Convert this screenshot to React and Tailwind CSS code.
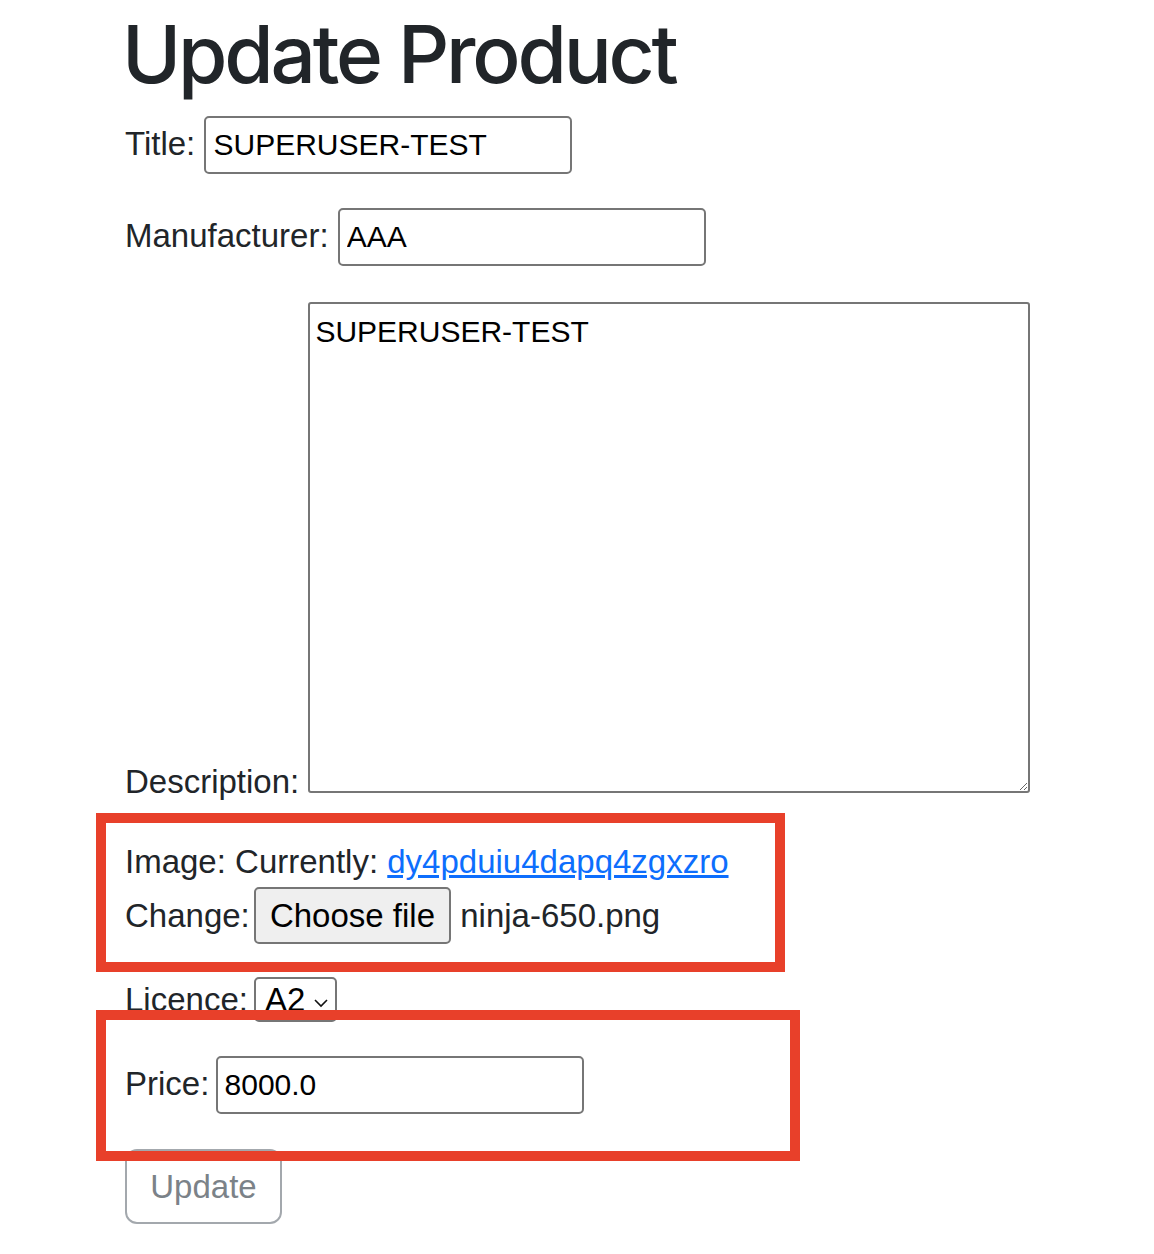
export default function App() {
  return (
    <div className="relative min-h-[1254px] bg-white font-['Liberation_Sans',Arial,sans-serif] text-[33px] leading-[48px] text-[#212529]">
      <div className="pl-[125px]">
        <h1 className="-ml-[3px] font-['Inter',sans-serif] font-medium text-[80px] leading-[100px] tracking-[-0.04em] pt-[4px] mb-[12px]">
          Update Product
        </h1>
        <form>
          <p className="mb-[32px]">
            Title:{" "}
            <input
              type="text"
              defaultValue="SUPERUSER-TEST"
              className="w-[368px] h-[58px] px-[7px] border-2 border-[#767676] rounded-[5px] text-black text-[30px]"
            />
          </p>
          <p className="mb-[36px] pt-[2px]">
            Manufacturer:{" "}
            <input
              type="text"
              defaultValue="AAA"
              className="w-[368px] h-[58px] px-[7px] border-2 border-[#767676] rounded-[5px] text-black text-[30px]"
            />
          </p>
          <p className="mb-[32px]">
            Description:{" "}
            <textarea
              defaultValue="SUPERUSER-TEST"
              className="w-[722px] h-[491px] px-[5px] py-[4px] border-2 border-[#767676] rounded-[3px] text-black text-[30px] leading-[48px]"
            />
          </p>
          <p className="mb-[32px]">
            Image: Currently:{" "}
            <a href="#" className="text-[#0d6efd] underline">
              dy4pduiu4dapq4zgxzro
            </a>
            <br />
            <span className="inline-block mt-[1px]">
              Change:{" "}
              <span className="-ml-[5px] inline-block h-[57px] px-[14px] leading-[53px] bg-[#efefef] border-2 border-[#767676] rounded-[5px] text-black">
                Choose file
              </span>{" "}
              ninja-650.png
            </span>
          </p>
          <p className="mb-[32px]">
            Licence:{" "}
            <span className="-ml-[3px] inline-block h-[45px] pl-[9px] pr-[6px] border-2 border-[#767676] rounded-[5px] text-black leading-[41px]">
              A2
              <svg width="16" height="10" viewBox="0 0 16 10" className="inline-block ml-[8px] align-[3px]">
                <path d="M2 2l6 6 6-6" fill="none" stroke="#111" strokeWidth="1.6" />
              </svg>
            </span>
          </p>
          <p className="mb-[35px]">
            Price:{" "}
            <input
              type="text"
              defaultValue="8000.0"
              className="-ml-[3px] w-[368px] h-[58px] px-[7px] border-2 border-[#767676] rounded-[5px] text-black text-[30px]"
            />
          </p>
          <button
            type="button"
            className="h-[75px] w-[157px] border-2 border-[#a3a8ad] rounded-[12px] text-[#7b8288] leading-[48px]"
          >
            Update
          </button>
        </form>
      </div>
      <div className="absolute left-[96px] top-[813px] w-[689px] h-[159px] border-[10px] border-[#e8402a] pointer-events-none" />
      <div className="absolute left-[96px] top-[1010px] w-[704px] h-[151px] border-[10px] border-[#e8402a] pointer-events-none" />
    </div>
  );
}
